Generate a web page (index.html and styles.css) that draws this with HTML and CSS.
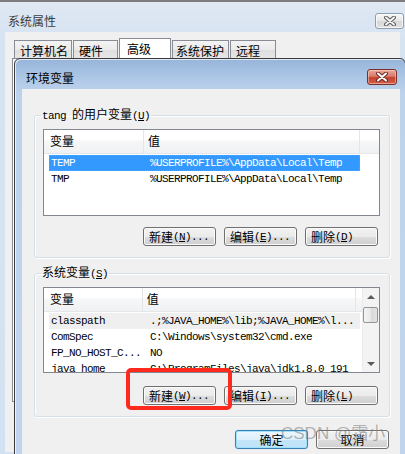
FILE: index.html
```html
<!DOCTYPE html>
<html lang="zh-CN">
<head>
<meta charset="utf-8">
<title>环境变量</title>
<link rel="stylesheet" href="styles.css">
</head>
<body>
<div class="outer">
  <div class="outer-title">
    <span class="outer-title-text">系统属性</span>
    <span class="xbtn xbtn-gray">
      <svg width="14" height="10" viewBox="0 0 14 10"><path d="M3 1.5 L11 8.5 M11 1.5 L3 8.5" stroke="#5b5b5b" stroke-width="4" stroke-linecap="round"/><path d="M3 1.5 L11 8.5 M11 1.5 L3 8.5" stroke="#f4f4f4" stroke-width="2" stroke-linecap="round"/></svg>
    </span>
  </div>
  <div class="outer-body">
    <div class="tabs">
      <span class="tab w1">计算机名</span>
      <span class="tab w2">硬件</span>
      <span class="tab active">高级</span>
      <span class="tab w4">系统保护</span>
      <span class="tab w5">远程</span>
    </div>
    <div class="tab-panel"></div>
  </div>
</div>

<div class="dialog">
  <div class="dlg-title">
    <span class="dlg-title-text">环境变量</span>
    <span class="xbtn xbtn-red">
      <svg width="14" height="10" viewBox="0 0 14 10"><path d="M3 1.5 L11 8.5 M11 1.5 L3 8.5" stroke="#6e2a20" stroke-width="4" stroke-linecap="round"/><path d="M3 1.5 L11 8.5 M11 1.5 L3 8.5" stroke="#ffffff" stroke-width="2" stroke-linecap="round"/></svg>
    </span>
  </div>
  <div class="dlg-body">
    <fieldset class="group">
      <legend><span class="m">tang </span>的用户变量<span class="m">(<u>U</u>)</span></legend>
      <div class="list list-user">
        <div class="list-main">
          <div class="lv-head">
            <span class="hc c1">变量</span>
            <span class="hc c2">值</span>
            <span class="hc c3"></span>
          </div>
          <div class="lv-rows">
            <div class="row sel"><span class="rc1 m">TEMP</span><span class="rc2 m">%USERPROFILE%\AppData\Local\Temp</span></div>
            <div class="row"><span class="rc1 m">TMP</span><span class="rc2 m">%USERPROFILE%\AppData\Local\Temp</span></div>
          </div>
        </div>
      </div>
      <div class="btnrow">
        <span class="btn">新建<span class="m">(<u>N</u>)...</span></span>
        <span class="btn">编辑<span class="m">(<u>E</u>)...</span></span>
        <span class="btn">删除<span class="m">(<u>D</u>)</span></span>
      </div>
    </fieldset>

    <fieldset class="group group-sys">
      <legend>系统变量<span class="m">(<u>S</u>)</span></legend>
      <div class="list list-sys">
        <div class="list-main">
          <div class="lv-head">
            <span class="hc c1">变量</span>
            <span class="hc c2">值</span>
            <span class="hc c3"></span>
          </div>
          <div class="lv-rows rows-sys">
            <div class="row hover"><span class="rc1 m">classpath</span><span class="rc2 m">.;%JAVA_HOME%\lib;%JAVA_HOME%\l...</span></div>
            <div class="row"><span class="rc1 m">ComSpec</span><span class="rc2 m">C:\Windows\system32\cmd.exe</span></div>
            <div class="row"><span class="rc1 m">FP_NO_HOST_C...</span><span class="rc2 m">NO</span></div>
            <div class="row"><span class="rc1 m">java_home</span><span class="rc2 m">C:\ProgramFiles\java\jdk1.8.0_191</span></div>
          </div>
        </div>
        <div class="vscroll">
          <span class="sb-btn"><span class="arr-up"></span></span>
          <span class="sb-thumb"></span>
          <span class="sb-track"></span>
          <span class="sb-btn"><span class="arr-down"></span></span>
        </div>
      </div>
      <div class="btnrow btnrow-sys">
        <span class="btn">新建<span class="m">(<u>W</u>)...</span></span>
        <span class="btn">编辑<span class="m">(<u>I</u>)...</span></span>
        <span class="btn">删除<span class="m">(<u>L</u>)</span></span>
      </div>
    </fieldset>

    <div class="okrow">
      <span class="btn btn-center btn-default">确定</span>
      <span class="btn btn-center">取消</span>
    </div>
  </div>
</div>

<div class="mark"></div>
<div class="wm">CSDN @霜小</div>
</body>
</html>
```

FILE: styles.css
```css
* { box-sizing: border-box; }

html, body {
  margin: 0;
  padding: 0;
}

body {
  width: 405px;
  height: 454px;
  overflow: hidden;
  position: relative;
  background: #d3e2f2;
  font-family: "Noto Sans CJK SC", "Liberation Sans", sans-serif;
  font-size: 12px;
  line-height: 14px;
  color: #000;
}

.m {
  font-family: "Liberation Mono", "Noto Sans CJK SC", monospace;
  font-size: 11px;
  letter-spacing: -0.6px;
}

u { text-decoration: underline; text-underline-offset: 1px; }

/* ---------- outer window (系统属性) ---------- */
.outer {
  position: absolute;
  left: 0;
  top: 0;
  width: 405px;
  height: 454px;
  border-top: 2px solid #7c7c7c;
  background: linear-gradient(#dfe8f3, #d6e3f1 40px, #d3e2f2);
}

.outer-title {
  display: flex;
  align-items: flex-start;
  height: 30px;
  padding: 11px 1px 0 8px;
}

.outer-title-text {
  margin-top: 1px;
  color: #3c3c3c;
  line-height: 14px;
}

.xbtn {
  margin-left: auto;
  display: flex;
  align-items: center;
  justify-content: center;
  border-radius: 3px;
}

.xbtn-gray {
  width: 29px;
  height: 16px;
  border: 1px solid #8c9db2;
  background: linear-gradient(#f7f7f7, #e6e6e6 50%, #d8d8d8 51%, #e2e2e2);
  box-shadow: inset 0 0 0 1px rgba(255,255,255,0.7);
}

.outer-body {
  margin-left: 5px;
  width: 395px;
  height: 420px;
  background: #f0f0f0;
  padding: 6px 0 0 9px;
}

.tabs {
  display: flex;
  align-items: flex-end;
  gap: 1px;
  height: 20px;
}

.tab {
  height: 18px;
  padding: 3px 0 0 5px;
  border: 1px solid #898c95;
  border-bottom: none;
  background: linear-gradient(#f3f3f3, #ebebeb 50%, #dedede 51%, #e6e6e6);
  line-height: 14px;
}

.w1 { width: 58px; }
.w2 { width: 45px; padding-left: 5px; }
.w4 { width: 57px; padding-left: 3px; }
.w5 { width: 46px; padding-left: 5px; }

.tab.active {
  width: 52px;
  height: 21px;
  margin-bottom: -1px;
  padding: 3px 0 0 7px;
  background: #ffffff;
}

.tab-panel {
  margin-left: -2px;
  width: 388px;
  height: 344px;
  border: 1px solid #898c95;
  background: #ffffff;
}

/* ---------- dialog (环境变量) ---------- */
.dialog {
  position: absolute;
  left: 14px;
  top: 58px;
  width: 392px;
  height: 400px;
  border: 1px solid #3b3b3b;
  border-radius: 6px 6px 0 0;
  padding: 0 5px 0 7px;
  background: linear-gradient(#97b4da, #b1cae8 22px, #bdd3ec 34px, #c0d5ed);
  box-shadow: inset 1px 1px 0 rgba(255,255,255,0.7);
}

.dlg-title {
  display: flex;
  align-items: flex-start;
  height: 30px;
  padding: 12px 3px 0 4px;
}

.dlg-title-text {
  line-height: 14px;
}

.xbtn-red {
  width: 30px;
  height: 16px;
  margin-top: -2px;
  border: 1px solid #77312a;
  background: linear-gradient(#e9a899, #d9796a 45%, #c4402e 55%, #d2604a);
  box-shadow: inset 0 0 0 1px rgba(255,220,210,0.5);
}

.dlg-body {
  height: 369px;
  background: #f0f0f0;
  padding: 0 10px 0 12px;
  display: flex;
  flex-direction: column;
}

/* ---------- group box ---------- */
.group {
  margin: 18px 0 0;
  padding: 6px 9px 11px 8px;
  min-width: 0;
  border: 1px solid #d5dfe5;
  border-radius: 3px;
  box-shadow: inset 1px 1px 0 #ffffff, 1px 1px 0 #ffffff;
}

.group legend {
  padding: 0 1px;
  margin-left: -2px;
  line-height: 14px;
  font-size: 12px;
}

.group-sys { margin-top: 7px; }

/* ---------- list view ---------- */
.list {
  display: flex;
  height: 87px;
  border: 1px solid #828790;
  background: #ffffff;
  overflow: hidden;
}

.list-sys { height: 86px; }

.list-main {
  flex: 1;
  min-width: 0;
}

.lv-head {
  display: flex;
  height: 24px;
  background: linear-gradient(#ffffff, #ffffff 45%, #f6f7f8 46%, #eff1f3);
  border-bottom: 1px solid #e4e6e9;
}

.hc {
  padding: 4px 0 0 6px;
  line-height: 14px;
  border-right: 1px solid #e3e5e8;
}

.c1 { width: 100px; }
.c2 { width: 216px; padding-left: 4px; }
.c3 { flex: 1; border-right: none; }

.lv-rows {
  padding: 1px 0 0 5px;
}

.rows-sys { padding-top: 1px; }

.row {
  display: flex;
  width: 311px;
  height: 16px;
  line-height: 16px;
  white-space: nowrap;
}

.rc1 { width: 101px; padding-left: 2px; }
.rc2 { flex: 1; }

.row.sel {
  background: #3399ff;
  color: #ffffff;
  outline: 1px dotted #c98b4e;
  outline-offset: -1px;
}

.row.hover {
  background: #efefef;
}

/* ---------- scrollbar ---------- */
.vscroll {
  width: 17px;
  display: flex;
  flex-direction: column;
  background: #f3f3f3;
  border-left: 1px solid #ececec;
}

.sb-btn {
  height: 17px;
  display: flex;
  align-items: center;
  justify-content: center;
}

.arr-up, .arr-down {
  width: 0;
  height: 0;
  border-left: 4px solid transparent;
  border-right: 4px solid transparent;
}

.arr-up { border-bottom: 4px solid #5a5a5a; }
.arr-down { border-top: 4px solid #5a5a5a; }

.sb-thumb {
  height: 16px;
  margin: 2px 1px 0 0;
  border: 1px solid #959595;
  border-radius: 2px;
  background: linear-gradient(90deg, #f4f4f4, #e8e8e8 50%, #d9d9d9 51%, #e2e2e2);
}

.sb-track { flex: 1; }

/* ---------- buttons ---------- */
.btnrow {
  display: flex;
  justify-content: flex-end;
  gap: 8px;
  margin-top: 11px;
  padding-right: 2px;
}

.btnrow-sys { margin-top: 13px; }

.btn {
  display: flex;
  align-items: center;
  width: 73px;
  height: 19px;
  padding: 0 0 0 5px;
  border: 1px solid #707070;
  border-radius: 3px;
  background: linear-gradient(#f2f2f2, #ebebeb 50%, #dddddd 51%, #cfcfcf);
  box-shadow: inset 0 0 0 1px #fbfbfb;
  line-height: 14px;
  white-space: nowrap;
}

.btn-center {
  justify-content: center;
  padding: 0;
}

.btn-default {
  border-color: #3c7fb1;
  background: linear-gradient(#ecf7fd, #dcf0fc 50%, #c4e5fa 51%, #bde2f8);
  box-shadow: inset 0 0 0 1px #9fe1fa, 0 0 1px #8fcbef;
}

.okrow {
  display: flex;
  justify-content: flex-end;
  gap: 8px;
  margin-top: 13px;
  padding-right: 1px;
}

/* ---------- overlays ---------- */
.mark {
  position: absolute;
  left: 126px;
  top: 368px;
  width: 106px;
  height: 42px;
  border: 4px solid #ff2a1e;
  border-radius: 5px;
}

.wm {
  position: absolute;
  left: 281px;
  top: 424px;
  font-family: "Liberation Sans", "Noto Sans CJK SC", sans-serif;
  font-size: 17px;
  line-height: 20px;
  color: rgba(120, 120, 120, 0.55);
  white-space: nowrap;
}
```
